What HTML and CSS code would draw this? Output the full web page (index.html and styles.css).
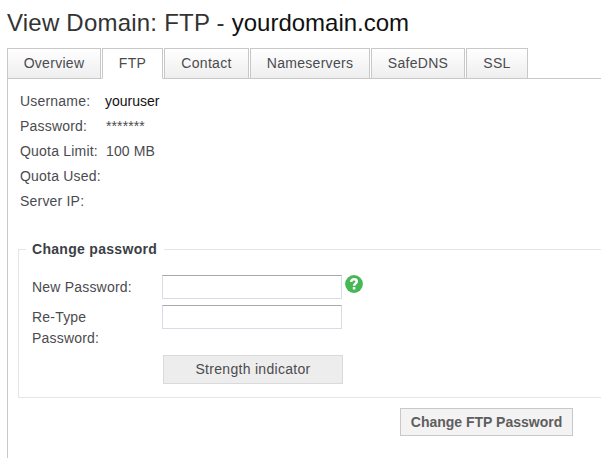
FILE: index.html
```html
<!DOCTYPE html>
<html lang="en">
<head>
<meta charset="utf-8">
<title>View Domain: FTP</title>
<link rel="stylesheet" href="styles.css">
</head>
<body>
<h1 class="title">View Domain: FTP - <span class="user-value">yourdomain.com</span></h1>
<nav class="tabs">
  <a class="tab overview">Overview</a>
  <a class="tab ftp active">FTP</a>
  <a class="tab contact">Contact</a>
  <a class="tab nameservers">Nameservers</a>
  <a class="tab safedns">SafeDNS</a>
  <a class="tab ssl">SSL</a>
</nav>
<main class="panel">
  <dl class="details">
    <dt>Username:</dt><dd class="user-value">youruser</dd>
    <dt>Password:</dt><dd>*******</dd>
    <dt>Quota Limit:</dt><dd>100 MB</dd>
    <dt>Quota Used:</dt><dd></dd>
    <dt>Server IP:</dt><dd></dd>
  </dl>
  <form>
    <fieldset class="change">
      <legend>Change password</legend>
      <div class="row">
        <label for="new">New Password:</label>
        <input id="new" type="password">
        <svg class="help" viewBox="0 0 18 18"><circle cx="9" cy="9" r="8.9" fill="#45b755"/><path d="M6.1 6.9C6.3 4.9 7.4 4.3 9 4.3c1.8 0 2.8.9 2.8 2.2C11.8 8.5 9.1 8.3 9.1 10.8" fill="none" stroke="#fff" stroke-width="2.5"/><rect x="7.8" y="11.9" width="2.6" height="2.5" rx=".5" fill="#fff"/></svg>
      </div>
      <div class="row">
        <label for="again">Re-Type<br>Password:</label>
        <input id="again" type="password">
      </div>
      <div class="strength">Strength indicator</div>
    </fieldset>
    <button class="submit" type="button">Change FTP Password</button>
  </form>
</main>
</body>
</html>
```

FILE: styles.css
```css
* { box-sizing: border-box; }
html { overflow: hidden; }
body {
  margin: 0;
  height: 458px;
  display: flex;
  flex-direction: column;
  overflow: hidden;
  background: #fff;
  color: #4b4b4f;
  font: 14px/21px "Liberation Sans", Arial, sans-serif;
  letter-spacing: .3px;
}
.title {
  margin: 0;
  padding: 8px 0 0 7px;
  height: 48px;
  color: #333;
  font-size: 24px;
  font-weight: 400;
  line-height: 30px;
  letter-spacing: .22px;
  white-space: nowrap;
}
.title .user-value { color: #111; letter-spacing: 0; }
.tabs {
  display: flex;
  flex: none;
  gap: 1px;
  height: 31px;
  padding-left: 7px;
  background: linear-gradient(#c8c8c8, #c8c8c8) 7px 100% / 100% 1px no-repeat;
}
.tab {
  height: 31px;
  border: 1px solid #c8c8c8;
  background: linear-gradient(#fff, #eee);
  line-height: 29px;
  text-align: center;
}
.overview { width: 94px; }
.ftp { width: 61px; }
.contact { width: 85px; }
.nameservers { width: 120px; }
.safedns { width: 94px; }
.ssl { width: 62px; }
.tab.active { background: #fff; border-bottom-color: #fff; }
.panel {
  flex: 1;
  margin-left: 7px;
  border-left: 1px solid #c8c8c8;
  padding: 12px 0 0 10px;
}
.details {
  display: grid;
  grid-template-columns: 85px 1fr;
  grid-auto-rows: 25px;
  margin: 0 0 25px 2px;
}
.details dt { white-space: nowrap; letter-spacing: .2px; }
.details dd { margin: 0; padding-left: 1px; letter-spacing: .1px; }
.details .user-value { color: #111; padding-left: 0; letter-spacing: 0; }
.change {
  min-width: 0;
  width: 600px;
  height: 157px;
  margin: 0;
  padding: 17px 0 0 13px;
  border: 1px solid #e5e5e5;
}
.change legend {
  height: 17px;
  margin-left: -6px;
  padding: 0 7px 0 6px;
  color: #3b3f46;
  font-weight: 700;
  line-height: 17px;
}
.row { display: flex; align-items: flex-start; height: 30px; }
.row label {
  width: 110px;
  margin: 2px 20px 0 0;
  letter-spacing: .2px;
  white-space: nowrap;
}
.row input {
  width: 180px;
  height: 24px;
  padding: 0 4px;
  border: 1px solid #d8dce5;
  border-top-color: #a9a9a9;
  border-radius: 0;
  background: #fff;
}
.help { width: 18px; height: 18px; margin-left: 3px; }
.strength {
  width: 180px;
  height: 29px;
  margin: 20px 0 0 131px;
  border: 1px solid #dadada;
  background: #ededed;
  line-height: 27px;
  text-align: center;
}
.submit {
  display: block;
  width: 173px;
  height: 28px;
  margin: 10px 0 0 382px;
  padding: 0;
  border: 1px solid #c8c8c8;
  background: #f3f3f3;
  color: #5e5e5e;
  font: 700 14px/26px "Liberation Sans", Arial, sans-serif;
  letter-spacing: 0;
}
```
